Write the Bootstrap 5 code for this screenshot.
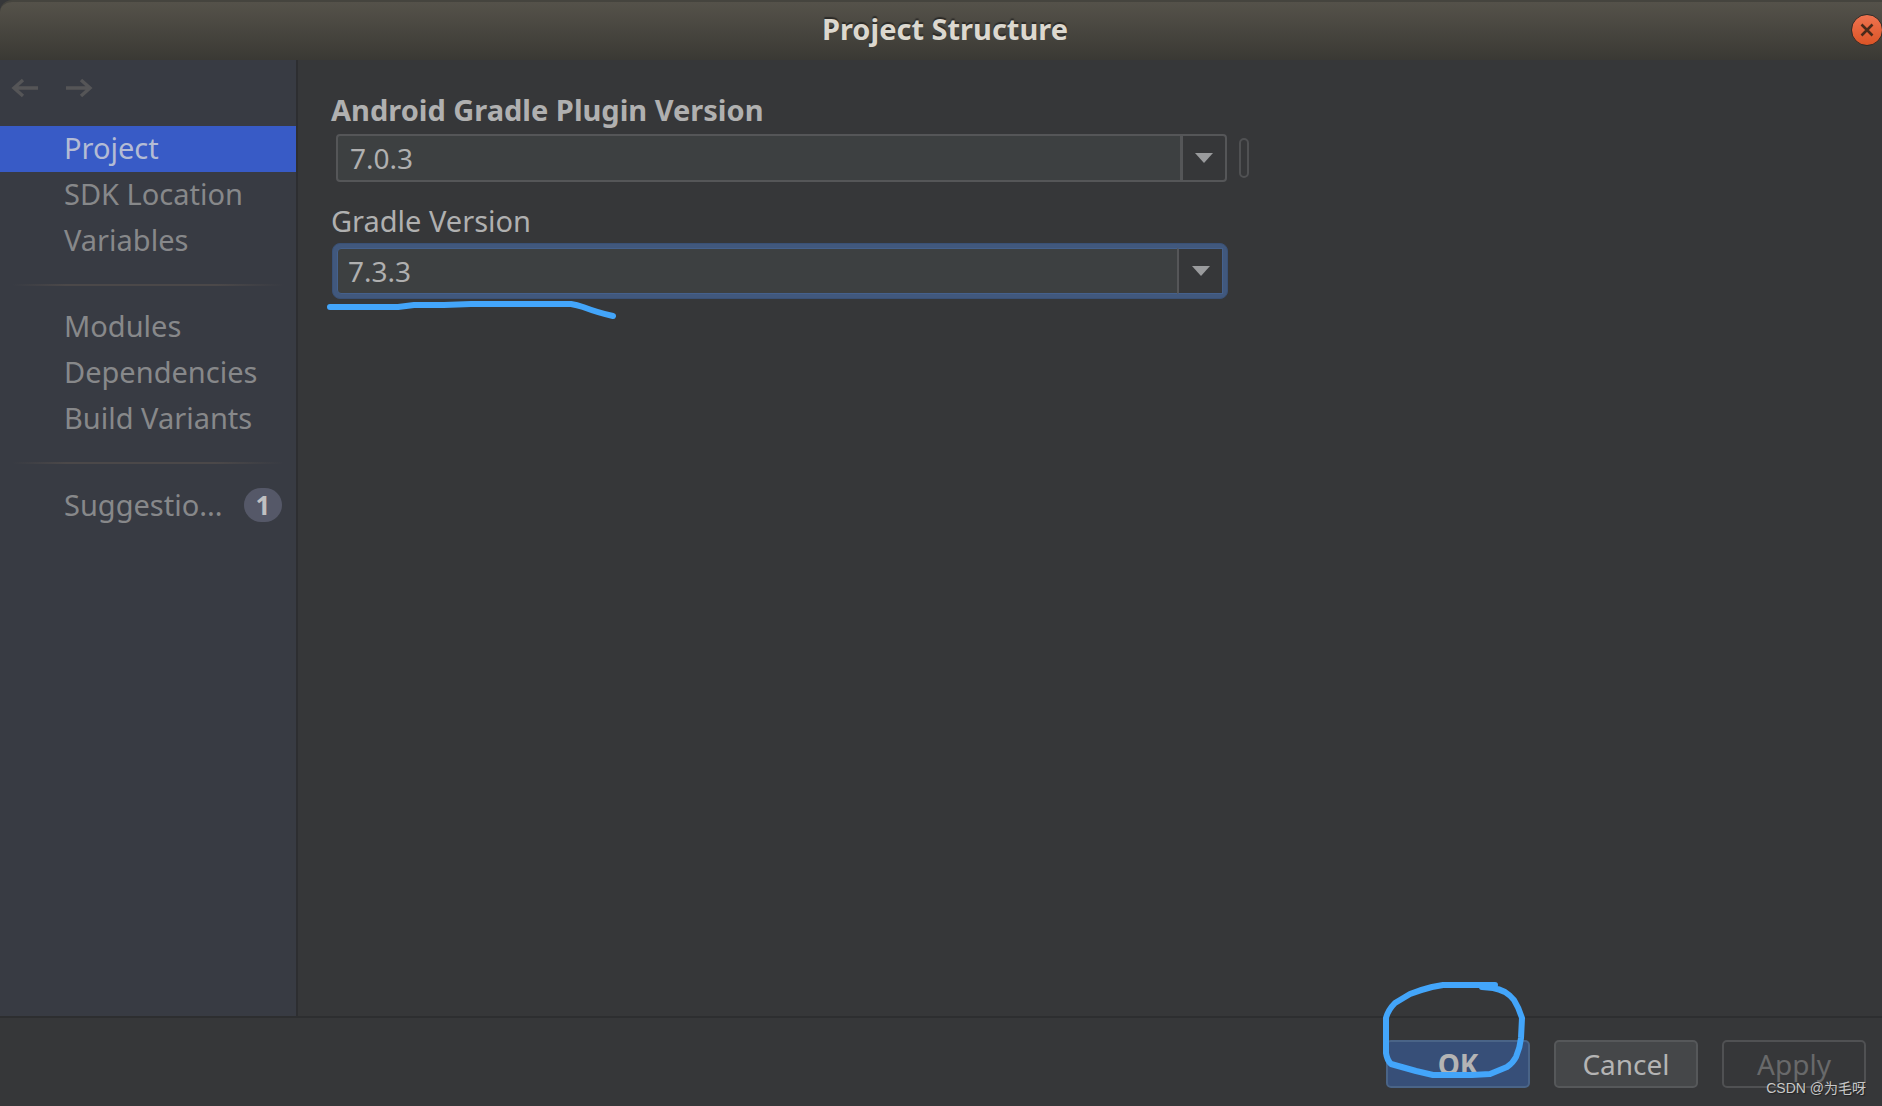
<!DOCTYPE html>
<html lang="en" data-bs-theme="dark">
<head>
<meta charset="utf-8">
<meta name="viewport" content="width=device-width, initial-scale=1">
<title>Project Structure</title>
<link rel="stylesheet" href="https://cdn.jsdelivr.net/npm/bootstrap@5.3.0/dist/css/bootstrap.min.css">
<style>
  body { font-family: "Noto Sans", "Open Sans", sans-serif; font-size: 29px; line-height: 46px; background: #363739; color: #b0b0b0; }
  .titlebar { height: 60px; padding-left: 8px; background: linear-gradient(#55524a, #3a3934); border-top: 2px solid #45443e; border-top-left-radius: 12px; }
  .titlebar h1 { font-size: 29px; line-height: 54px; font-weight: 700; color: #dcd8cf; text-shadow: 0 -2px 1px #2c2b28; }
  .close-btn { right: -1px; top: 12px; width: 32px; height: 32px; border: 1px solid #2e2c28; background: linear-gradient(#ef7350, #db5426); }
  .sidebar { width: 298px; background: #383b43; border-right: 2px solid #2d2e31; }
  .history { padding: 16px 8px 18px; gap: 22px; }
  .history button { line-height: 0; color: #555557; }
  .sidebar .nav-link { padding: 0 16px 0 64px; color: #87888a; height: 46px; line-height: 44px; border-radius: 0; }
  .sidebar .nav-link.active { background: #385bc6; color: #b4bcd4; }
  .fade-rule { height: 2px; margin: 20px 12px 18px; border: 0; opacity: 1; background: linear-gradient(90deg, transparent, #4b4849 20%, #4b4849 75%, transparent); }
  .count { width: 38px; height: 34px; line-height: 34px; font-size: 26px; padding: 0; margin-right: -2px; background: #555868; color: #c0c0c2; }
  .settings { padding: 27px 33px; }
  .settings label { line-height: 45px; }
  .combo-row { max-width: 918px; gap: 8px; }
  .combo { padding: 2px; margin: 0 2px 0 3px; height: 52px; }
  .combo .form-control, .combo .btn { font-size: 28px; line-height: 34px; border: 2px solid #555658; border-radius: 4px; box-shadow: none; }
  .combo .form-control { background: #3d4041; color: #b0b0b0; padding: 5px 12px; }
  .combo .btn { width: 46px; padding: 0; background: #363739; line-height: 0; }
  .combo-focus { height: 56px; margin: 0 0 0 1px; padding: 4px; background: #41587d; border: 1px solid #3a5176; border-radius: 8px; max-width: 896px; }
  .combo-focus .form-control, .combo-focus .btn { border-width: 1px; border-color: #45618d; }
  .combo-focus .btn { border-left: 2px solid #555658; }
  .combo-focus .form-control { padding: 4px 10px; }
  .grip { width: 10px; height: 40px; border: 2px solid #505153; border-radius: 5px; background: none; }
  .field-gap { margin-top: 14px; }
  .footer-bar { border-top: 2px solid #2d2e30; padding: 22px 16px 18px; gap: 24px; }
  .footer-bar .btn { width: 144px; height: 48px; padding: 0; font-size: 28px; line-height: 42px; border: 2px solid #56585a; border-radius: 5px; background: #454749; color: #b4b4b4; }
  .footer-bar .btn-ok { background: #374f78; border-color: #4a6487; font-weight: 700; }
  .footer-bar .btn:disabled { background: transparent; border-color: #505153; color: #68696a; opacity: 1; }
  .pen { fill: none; stroke: #43a5fa; stroke-width: 6; stroke-linecap: round; stroke-linejoin: round; pointer-events: none; z-index: 5; }
  .pen-line { left: -6px; top: 54px; }
  .pen-ring { left: -6px; top: -60px; }
  .watermark { right: 16px; bottom: 7px; font: 14px/22px "Liberation Sans", "Noto Sans CJK SC", sans-serif; color: #c8c8c8; text-shadow: 1px 1px 1px #222; }
</style>
</head>
<body>
<div class="d-flex flex-column min-vh-100 position-relative overflow-hidden">
  <header class="titlebar text-center position-relative">
    <h1 class="m-0">Project Structure</h1>
    <button type="button" class="close-btn position-absolute rounded-circle p-0 d-flex align-items-center justify-content-center" aria-label="Close">
      <svg width="14" height="14" viewBox="0 0 14 14" fill="none" stroke="#4a2a1a" stroke-width="2.6"><path d="M1.5 1.5 12.5 12.5M12.5 1.5 1.5 12.5"/></svg>
    </button>
  </header>

  <div class="d-flex flex-grow-1">
    <aside class="sidebar flex-shrink-0">
      <div class="history d-flex">
        <button type="button" class="btn border-0 p-0" aria-label="Back">
          <svg width="32" height="32" viewBox="0 0 32 32" fill="none" stroke="currentColor" stroke-width="3.4"><path d="M30 12H6M15 4 6 12l9 8"/></svg>
        </button>
        <button type="button" class="btn border-0 p-0" aria-label="Forward">
          <svg width="32" height="32" viewBox="0 0 32 32" fill="none" stroke="currentColor" stroke-width="3.4"><path d="M4 12h24M19 4l9 8-9 8"/></svg>
        </button>
      </div>
      <nav class="nav flex-column flex-nowrap">
        <a class="nav-link active" href="#project" aria-current="page">Project</a>
        <a class="nav-link" href="#sdk">SDK Location</a>
        <a class="nav-link" href="#variables">Variables</a>
        <hr class="fade-rule">
        <a class="nav-link" href="#modules">Modules</a>
        <a class="nav-link" href="#dependencies">Dependencies</a>
        <a class="nav-link" href="#build">Build Variants</a>
        <hr class="fade-rule">
        <a class="nav-link d-flex align-items-center justify-content-between" href="#suggestions">Suggestio...<span class="badge rounded-pill count">1</span></a>
      </nav>
    </aside>

    <main class="settings flex-grow-1">
      <label for="agp" class="d-block fw-bold">Android Gradle Plugin Version</label>
      <div class="combo-row d-flex align-items-center">
        <div class="combo input-group">
          <input id="agp" type="text" class="form-control" value="7.0.3">
          <button type="button" class="btn" aria-label="Show plugin versions"><svg width="18" height="10" viewBox="0 0 18 10"><path d="M0 0h18L9 10z" fill="#9a9b9d"/></svg></button>
        </div>
        <button type="button" class="grip flex-shrink-0 p-0" aria-label="More"></button>
      </div>
      <label for="gradle" class="d-block field-gap">Gradle Version</label>
      <div class="combo combo-focus input-group">
        <input id="gradle" type="text" class="form-control" value="7.3.3">
        <button type="button" class="btn" aria-label="Show Gradle versions"><svg width="18" height="10" viewBox="0 0 18 10"><path d="M0 0h18L9 10z" fill="#9a9b9d"/></svg></button>
        <svg class="pen pen-line position-absolute" width="300" height="24" viewBox="0 0 300 24"><path d="M4 9h68l16-2h30l27-1h100q6 1 12 3 16 6 30 9"/></svg>
      </div>
    </main>
  </div>

  <footer class="footer-bar d-flex justify-content-end">
    <div class="position-relative d-flex">
      <button type="button" class="btn btn-ok">OK</button>
      <svg class="pen pen-ring position-absolute" width="152" height="104" viewBox="0 0 152 104"><path d="M115 5H63L52 7Q40 10 30 14L15 23Q8 30 6 38V73Q7 80 11 84L36 91 53 95H92L110 94 127 87Q133 83 136 77 140 68 141 58L142 38Q139 28 134 20 130 15 125 12 119 9 113 8L102 7"/></svg>
    </div>
    <button type="button" class="btn">Cancel</button>
    <button type="button" class="btn" disabled>Apply</button>
  </footer>
  <div class="watermark position-absolute">CSDN @为毛呀</div>
</div>
<script src="https://cdn.jsdelivr.net/npm/bootstrap@5.3.0/dist/js/bootstrap.bundle.min.js"></script>
</body>
</html>
